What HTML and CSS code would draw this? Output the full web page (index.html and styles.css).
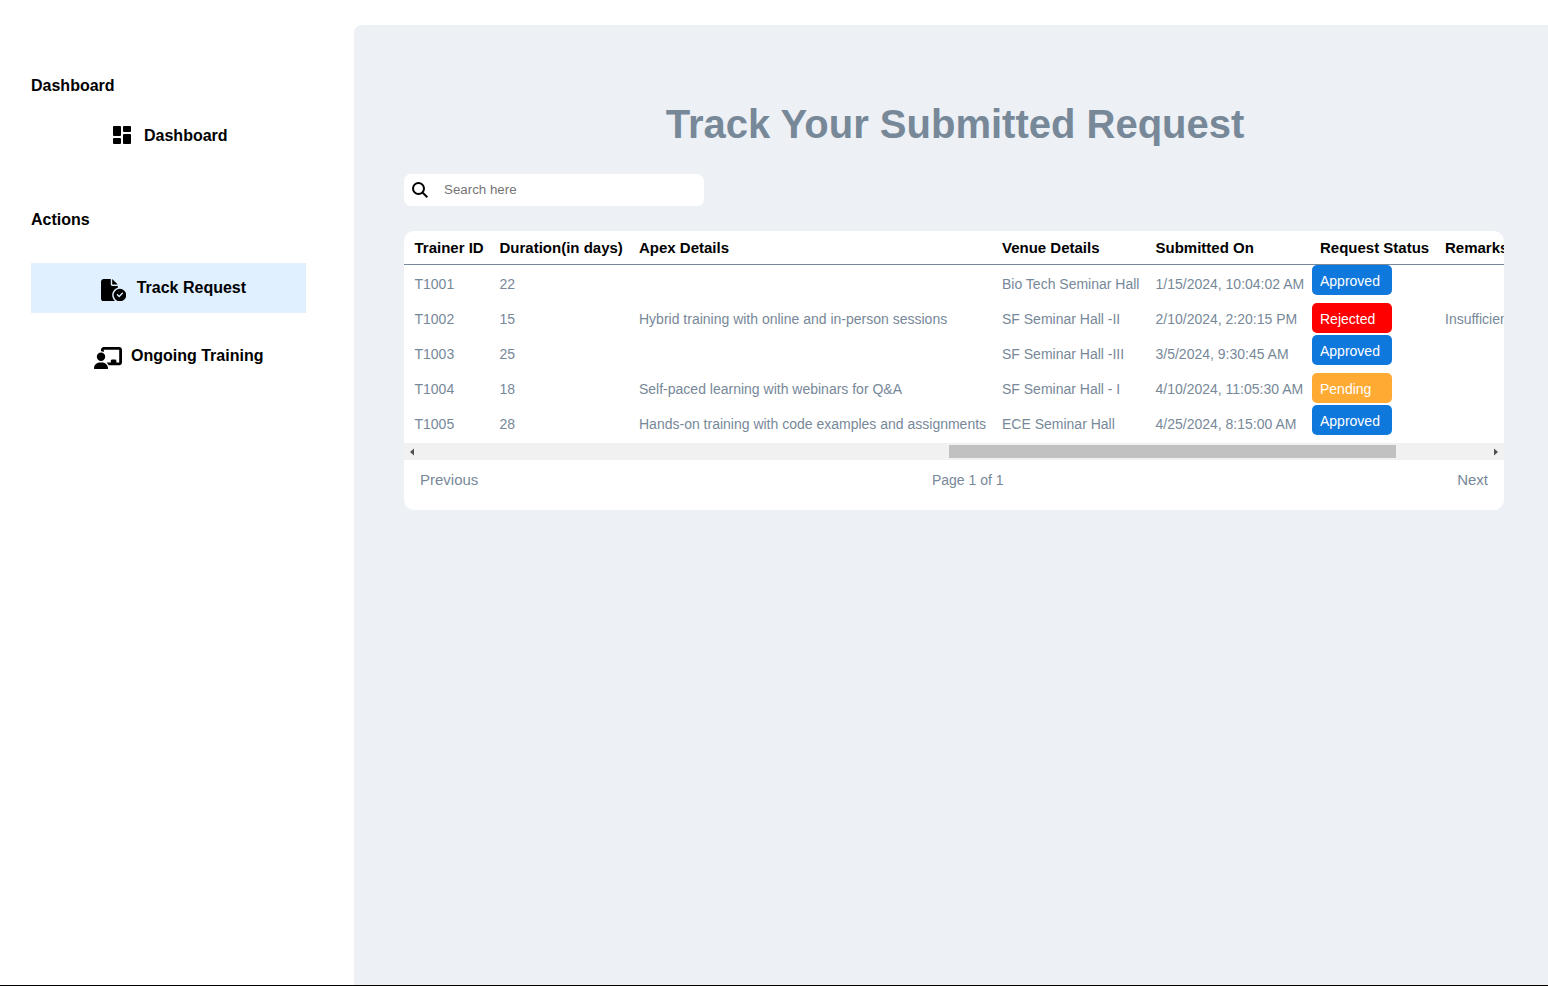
FILE: index.html
```html
<!DOCTYPE html>
<html lang="en">
<head>
<meta charset="utf-8">
<title>Track Request</title>
<link rel="stylesheet" href="styles.css">
</head>
<body>
<div class="page">
  <nav class="sidebar">
    <h4 class="group">Dashboard</h4>
    <a class="item item-dashboard">
      <svg class="icon-dashboard" viewBox="0 0 18 18"><rect width="8" height="10" rx="1"/><rect y="12" width="8" height="6" rx="1"/><rect x="10" width="8" height="6" rx="1"/><rect x="10" y="8" width="8" height="10" rx="1"/></svg>
      <span>Dashboard</span>
    </a>
    <h4 class="group group-actions">Actions</h4>
    <a class="item item-track">
      <svg class="icon-file" viewBox="0 0 576 512"><path d="M0 64C0 28.700 28.700 0 64 0H224V128c0 17.700 14.300 32 32 32H384v38.600C310.100 219.500 256 287.400 256 368c0 59.100 29.100 111.300 73.700 143.300c-3.200.5-6.400.7-9.700.7H64c-35.300 0-64-28.700-64-64V64zM384 128H256V0L384 128z"/><path fill-rule="evenodd" d="M432 224a144 144 0 1 1 0 288 144 144 0 1 1 0-288zm67.300 91.300c-6.200-6.200-16.400-6.200-22.600 0L416 376l-28.700-28.700c-6.200-6.200-16.400-6.200-22.600 0s-6.200 16.400 0 22.600l40 40c6.200 6.200 16.400 6.200 22.600 0l72-72c6.200-6.200 6.200-16.400 0-22.600z"/></svg>
      <span>Track Request</span>
    </a>
    <a class="item item-training">
      <svg class="icon-board" viewBox="0 0 640 512"><path d="M160 64c0-35.300 28.700-64 64-64H576c35.300 0 64 28.700 64 64V352c0 35.300-28.700 64-64 64H336.800c-11.800-25.500-29.900-47.500-52.400-64H384V320c0-17.700 14.300-32 32-32h64c17.700 0 32 14.300 32 32v32h64V64H224v49.100C205.200 102.200 183.300 96 160 96V64zm0 64a96 96 0 1 1 0 192 96 96 0 1 1 0-192zM133.300 352h53.300C260.300 352 320 411.700 320 485.300c0 14.700-11.900 26.700-26.700 26.700H26.700C11.900 512 0 500.100 0 485.300C0 411.700 59.700 352 133.300 352z"/></svg>
      <span>Ongoing Training</span>
    </a>
  </nav>
  <main class="main">
    <h1 class="title">Track Your Submitted Request</h1>
    <label class="search">
      <svg class="icon-search" viewBox="0 0 16 16"><circle cx="6.500" cy="6.500" r="5.500"/><path d="M10.500 10.500L15.300 15.300"/></svg>
      <input class="search-input" type="text" placeholder="Search here">
    </label>
    <section class="card">
      <div class="row head"><span>Trainer ID</span><span>Duration(in days)</span><span>Apex Details</span><span>Venue Details</span><span>Submitted On</span><span class="status-head">Request Status</span><span>Remarks</span></div>
      <div class="rows">
        <div class="row"><span>T1001</span><span>22</span><span></span><span>Bio Tech Seminar Hall</span><span>1/15/2024, 10:04:02 AM</span><b class="pill approved">Approved</b><span></span></div>
        <div class="row"><span>T1002</span><span>15</span><span>Hybrid training with online and in-person sessions</span><span>SF Seminar Hall -II</span><span>2/10/2024, 2:20:15 PM</span><b class="pill rejected">Rejected</b><span>Insufficient</span></div>
        <div class="row"><span>T1003</span><span>25</span><span></span><span>SF Seminar Hall -III</span><span>3/5/2024, 9:30:45 AM</span><b class="pill approved">Approved</b><span></span></div>
        <div class="row"><span>T1004</span><span>18</span><span>Self-paced learning with webinars for Q&amp;A</span><span>SF Seminar Hall - I</span><span>4/10/2024, 11:05:30 AM</span><b class="pill pending">Pending</b><span></span></div>
        <div class="row"><span>T1005</span><span>28</span><span>Hands-on training with code examples and assignments</span><span>ECE Seminar Hall</span><span>4/25/2024, 8:15:00 AM</span><b class="pill approved">Approved</b><span></span></div>
      </div>
      <div class="scrollbar">
        <svg class="arrow" viewBox="0 0 4 8"><path d="M4 0.500v7L0 4z"/></svg>
        <div class="thumb"></div>
        <svg class="arrow" viewBox="0 0 4 8"><path d="M0 0.500v7L4 4z"/></svg>
      </div>
      <footer class="pager"><span>Previous</span><span class="count">Page 1 of 1</span><span>Next</span></footer>
    </section>
  </main>
</div>
</body>
</html>
```
FILE: styles.css
```css
* { box-sizing: border-box; }
body { margin: 0; background: #fff; font-family: Arial, "Liberation Sans", sans-serif; }
.page { display: flex; height: 986px; overflow: hidden; border-bottom: 1px solid #000; }
.sidebar { width: 354px; padding: 77px 48px 0 31px; display: flex; flex-direction: column; color: #000; }
.group { margin: 0; font-size: 16px; line-height: 18px; }
.group-actions { margin-top: 50px; }
.item { display: flex; align-items: center; height: 50px; font-size: 16px; font-weight: bold; line-height: 18px; white-space: nowrap; }
.item-dashboard { margin-top: 16px; padding-left: 82px; gap: 13px; }
.item-track { margin-top: 34px; padding-left: 69.500px; gap: 11px; background: #e0f0ff; }
.item-training { margin-top: 18px; padding-left: 63px; gap: 9px; }
.icon-dashboard { width: 18px; height: 18px; margin-top: -2px; }
.icon-file { width: 25.200px; height: 22.400px; margin-top: 4px; }
.icon-board { width: 28px; height: 22.400px; margin-top: 4px; }
.main { width: 1194px; margin-top: 25px; padding: 76px 44px 0 50px; background: #edf0f5; border-top-left-radius: 8px; }
.title { margin: 0; height: 46px; padding-left: 2px; color: #778899; font-size: 40px; line-height: 46px; text-align: center; }
.search { display: flex; align-items: center; width: 300px; height: 32px; margin-top: 27px; padding: 0 8px; background: #fff; border-radius: 7px; }
.icon-search { width: 16px; height: 16px; fill: none; stroke: #000; stroke-width: 2; }
.search-input { flex: 1; min-width: 0; margin-left: 16px; padding: 0 0 2px; border: 0; outline: 0; background: none; font: 13.333px Arial, "Liberation Sans", sans-serif; }
.search-input::placeholder { color: #757575; }
.card { width: 1100px; height: 279px; margin-top: 25px; overflow: hidden; background: #fff; border-radius: 10px; }
.row { display: grid; grid-template-columns: 85px 139.500px 363px 153.500px 156.500px 133px 200px; height: 35px; padding-left: 10.500px; align-items: center; color: #778899; font-size: 14px; line-height: 16px; white-space: nowrap; }
.head { height: 34px; border-bottom: 1px solid #778899; color: #000; font-size: 15px; font-weight: bold; }
.status-head { padding-left: 8px; }
.rows { height: 178px; padding-top: 2px; }
.rows span { padding-bottom: 2px; }
.pill { align-self: start; width: 80px; height: 30px; padding: 8px; border-radius: 5px; color: #fff; font-weight: normal; line-height: 16px; }
.approved { margin-top: -2px; background: #0f78dd; }
.rejected { margin-top: 1px; background: #f00; }
.pending { margin-top: 1px; background: #ffaa33; }
.scrollbar { display: flex; align-items: center; justify-content: space-between; height: 17px; padding: 0 6px; background: #f1f1f1; }
.arrow { width: 4px; height: 8px; fill: #505050; }
.thumb { width: 447px; height: 13px; margin-left: auto; margin-right: 98px; background: #c1c1c1; }
.pager { display: flex; justify-content: space-between; padding: 11px 16px; color: #778899; font-size: 15px; line-height: 18px; }
.count { font-size: 14px; }
```
